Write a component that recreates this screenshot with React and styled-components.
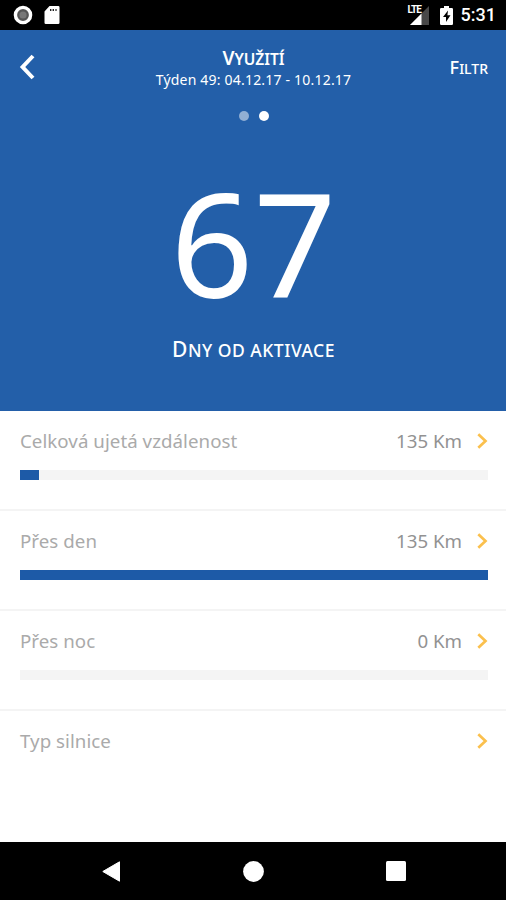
import React from "react";
import styled, { createGlobalStyle } from "styled-components";

const rows = [
  { label: "Celková ujetá vzdálenost", value: "135 Km", percent: 4 },
  { label: "Přes den", value: "135 Km", percent: 100 },
  { label: "Přes noc", value: "0 Km", percent: 0 },
  { label: "Typ silnice" },
];

export default function App() {
  return (
    <Screen>
      <GlobalStyle />
      <StatusBar>
        <StatusGroup>
          <svg width="20" height="20" viewBox="0 0 20 20">
            <circle cx="10" cy="10" r="7.6" fill="#555" stroke="#fff" strokeWidth="3.4" />
            <circle cx="10" cy="10" r="3.6" fill="#777" />
          </svg>
          <svg width="16" height="20" viewBox="0 0 16 20">
            <path d="M5.5 1h8.7q1.3 0 1.3 1.3v15.4q0 1.3-1.3 1.3H1.8Q.5 19 .5 17.7V6.5z" fill="#fff" />
            <path d="M6 4h1.4v2H6zM8.6 4H10v2H8.6zM11.4 4h1.2v2h-1.2z" fill="#222" />
          </svg>
        </StatusGroup>
        <StatusGroup>
          <Signal>
            <svg width="19" height="19" viewBox="0 0 19 19">
              <path d="M19 0v19H0z" fill="#484848" />
              <path d="M11.5 7.5V19H0z" fill="#fff" />
            </svg>
            <SignalType>LTE</SignalType>
          </Signal>
          <svg width="13" height="19" viewBox="0 0 13 19">
            <path d="M4 0h5v2h2.8Q13 2 13 3.2v14.6q0 1.2-1.2 1.2H1.2Q0 19 0 17.8V3.2Q0 2 1.2 2H4z" fill="#fff" />
            <path d="M8 4.5 3 11h3v5l4.5-6.7H7.4z" fill="#000" />
          </svg>
          <Clock>5:31</Clock>
        </StatusGroup>
      </StatusBar>
      <Header>
        <TopBar>
          <BackButton aria-label="Zpět">
            <svg width="16" height="26" viewBox="0 0 16 26">
              <path d="M14 2 3.6 13 14 24" fill="none" stroke="#fff" strokeWidth="4" />
            </svg>
          </BackButton>
          <Heading>
            <Title>Využití</Title>
            <Period>Týden 49: 04.12.17 - 10.12.17</Period>
          </Heading>
          <FilterButton>Filtr</FilterButton>
        </TopBar>
        <Dots>
          <Dot />
          <Dot $active />
        </Dots>
        <BigNumber>67</BigNumber>
        <Caption>Dny od aktivace</Caption>
      </Header>
      <List>
        {rows.map((row) => (
          <Row key={row.label}>
            <RowLine>
              <Label>{row.label}</Label>
              <Value>{row.value}</Value>
              <svg width="11" height="16" viewBox="0 0 11 16">
                <path d="m1.3 1.3 7.2 6.7-7.2 6.7" fill="none" stroke="#fbc04d" strokeWidth="2.7" />
              </svg>
            </RowLine>
            {row.percent !== undefined && (
              <Track>
                <Fill style={{ width: `${row.percent}%` }} />
              </Track>
            )}
          </Row>
        ))}
      </List>
      <NavBar>
        <svg width="18" height="21" viewBox="0 0 18 21">
          <path d="M17.5.8v19.4L.8 10.5z" fill="#fff" stroke="#fff" strokeLinejoin="round" />
        </svg>
        <svg width="21" height="21" viewBox="0 0 21 21">
          <circle cx="10.5" cy="10.5" r="10.4" fill="#fff" />
        </svg>
        <svg width="20" height="20" viewBox="0 0 20 20">
          <rect width="20" height="20" rx="1.5" fill="#fff" />
        </svg>
      </NavBar>
    </Screen>
  );
}

const GlobalStyle = createGlobalStyle`
  * {
    box-sizing: border-box;
  }
  body {
    margin: 0;
    background: #fff;
    font-family: "Noto Sans", sans-serif;
  }
  svg {
    display: block;
    flex: none;
  }
  button {
    padding: 0;
    border: 0;
    background: none;
    color: inherit;
    font-family: inherit;
  }
`;

const Screen = styled.div`
  display: flex;
  flex-direction: column;
  width: 506px;
  height: 900px;
  overflow: hidden;
`;

const StatusBar = styled.div`
  display: flex;
  justify-content: space-between;
  height: 30px;
  padding: 0 10px 0 13px;
  background: #000;
`;

const StatusGroup = styled.div`
  display: flex;
  align-items: center;
  gap: 11px;
`;

const Signal = styled.div`
  position: relative;
`;

const SignalType = styled.span`
  position: absolute;
  top: -2px;
  left: -2px;
  color: #fff;
  font: bold 10px/11px Roboto, sans-serif;
  letter-spacing: -0.9px;
`;

const Clock = styled.span`
  margin-left: -3px;
  color: #fff;
  font: 500 18px/32px Roboto, sans-serif;
`;

const Header = styled.header`
  display: flex;
  flex-direction: column;
  align-items: center;
  height: 381px;
  background: #235fa9;
  color: #fff;
`;

const TopBar = styled.div`
  display: grid;
  grid-template-columns: 80px 1fr 80px;
  width: 100%;
  height: 74px;
  padding: 0 18px 0 19px;
`;

const BackButton = styled.button`
  align-self: center;
`;

const Heading = styled.div`
  padding-top: 16px;
  text-align: center;
`;

const Title = styled.h1`
  margin: 0;
  font-size: 15.5px;
  line-height: 24px;
  font-weight: 600;
  text-transform: uppercase;
  &::first-letter {
    font-size: 19px;
  }
`;

const Period = styled.div`
  font-size: 14px;
  line-height: 18px;
  letter-spacing: 0.2px;
  white-space: nowrap;
`;

const FilterButton = styled.button`
  display: block;
  font-size: 14px;
  font-weight: 500;
  text-align: right;
  text-transform: uppercase;
  &::first-letter {
    font-size: 18px;
  }
`;

const Dots = styled.div`
  display: flex;
  gap: 10px;
  margin-top: 7px;
  padding-left: 1px;
`;

const Dot = styled.span`
  width: 10px;
  height: 10px;
  border-radius: 50%;
  background: ${(props) => (props.$active ? "#fff" : "#91afd4")};
`;

const BigNumber = styled.div`
  margin-top: 41px;
  padding-left: 1px;
  font-size: 145px;
  line-height: 160px;
  letter-spacing: 0;
`;

const Caption = styled.div`
  margin-top: 12px;
  padding-left: 1px;
  font-size: 17.5px;
  font-weight: 500;
  line-height: 30px;
  letter-spacing: 0.5px;
  text-transform: uppercase;
  &::first-letter {
    font-size: 21px;
  }
`;

const List = styled.main`
  flex: 1;
`;

const Row = styled.section`
  height: 100px;
  padding: 17px 18px 0 20px;
  border-bottom: 2px solid #f4f4f4;
  &:last-child {
    border-bottom: 0;
  }
`;

const RowLine = styled.div`
  display: flex;
  align-items: center;
  height: 26px;
  font-size: 18.7px;
  line-height: 24px;
`;

const Label = styled.span`
  flex: 1;
  color: #aaa;
  letter-spacing: 0.05px;
`;

const Value = styled.span`
  margin-right: 15px;
  color: #929292;
`;

const Track = styled.div`
  height: 10px;
  margin-top: 16px;
  background: #f4f4f4;
`;

const Fill = styled.div`
  height: 100%;
  background: #1d5aa7;
`;

const NavBar = styled.nav`
  display: flex;
  align-items: center;
  justify-content: space-between;
  height: 58px;
  padding: 0 100px 0 102px;
  background: #000;
`;
